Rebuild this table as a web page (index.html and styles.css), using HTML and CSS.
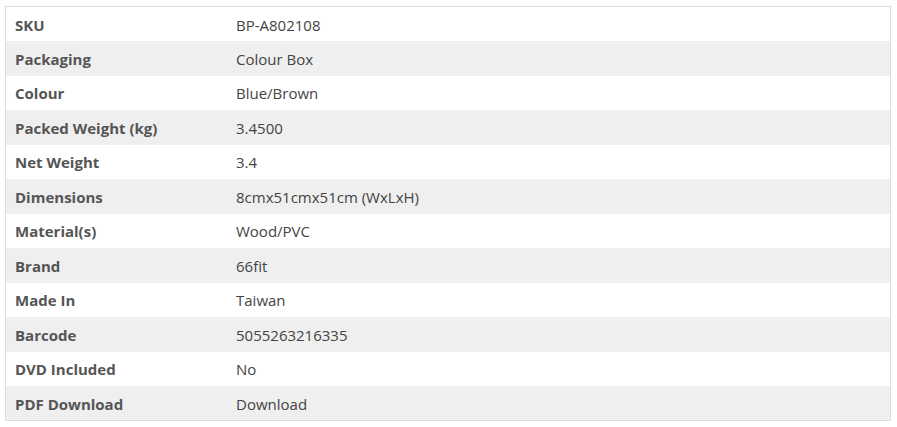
FILE: index.html
```html
<!DOCTYPE html>
<html>
<head>
<meta charset="utf-8">
<link rel="stylesheet" href="styles.css">
</head>
<body>
<table class="specs">
<tbody>
<tr><th>SKU</th><td>BP-A802108</td></tr>
<tr><th>Packaging</th><td>Colour Box</td></tr>
<tr><th>Colour</th><td>Blue/Brown</td></tr>
<tr><th>Packed Weight (kg)</th><td>3.4500</td></tr>
<tr><th>Net Weight</th><td>3.4</td></tr>
<tr><th>Dimensions</th><td>8cmx51cmx51cm (WxLxH)</td></tr>
<tr><th>Material(s)</th><td>Wood/PVC</td></tr>
<tr><th>Brand</th><td>66fit</td></tr>
<tr><th>Made In</th><td>Taiwan</td></tr>
<tr><th>Barcode</th><td>5055263216335</td></tr>
<tr><th>DVD Included</th><td>No</td></tr>
<tr><th>PDF Download</th><td>Download</td></tr>
</tbody>
</table>
</body>
</html>
```
FILE: styles.css
```css
html, body {
  margin: 0;
  padding: 0;
  background: #fff;
}
body {
  padding: 6px 0 0 5px;
  font-family: "Open Sans", "Liberation Sans", sans-serif;
  font-size: 15px;
}
.specs {
  width: 886px;
  border-collapse: collapse;
  border: 1px solid #dcdcdc;
  table-layout: fixed;
}
.specs tr {
  height: 34.5px;
}
.specs tr:nth-child(even) {
  background: #efefef;
}
.specs th, .specs td {
  padding: 1px 0 0 9px;
  text-align: left;
  vertical-align: middle;
  line-height: 20px;
}
.specs th {
  width: 212px;
  font-weight: 700;
  color: #555;
}
.specs td {
  font-weight: 400;
  color: #444;
}
```
